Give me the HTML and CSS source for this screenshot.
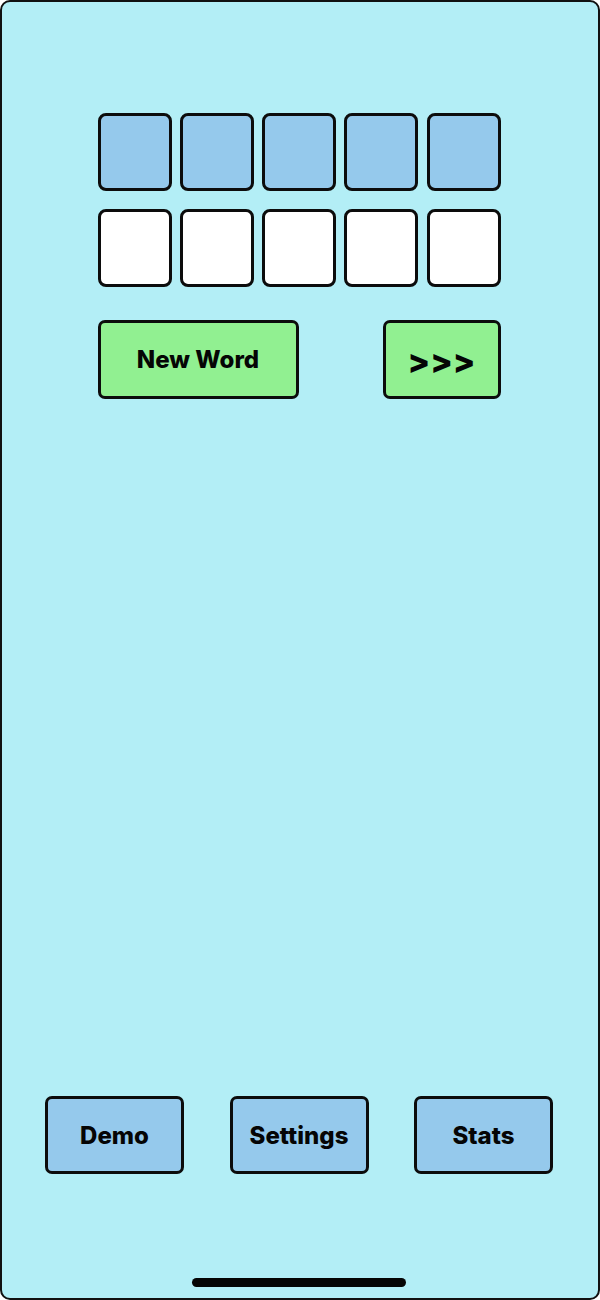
FILE: index.html
```html
<!DOCTYPE html>
<html lang="en">
<head>
    <meta charset="UTF-8">
    <meta name="viewport" content="width=device-width, initial-scale=1.0">
    <title>Word Game</title>
    <link rel="stylesheet" href="styles.css">
</head>
<body>
    <div class="screen">
        <div class="board">
            <div class="row">
                <div class="tile tile-blue"></div>
                <div class="tile tile-blue"></div>
                <div class="tile tile-blue"></div>
                <div class="tile tile-blue"></div>
                <div class="tile tile-blue"></div>
            </div>
            <div class="row">
                <div class="tile"></div>
                <div class="tile"></div>
                <div class="tile"></div>
                <div class="tile"></div>
                <div class="tile"></div>
            </div>
            <div class="actions">
                <button class="btn btn-green btn-new">New Word</button>
                <button class="btn btn-green btn-next">&gt;&gt;&gt;</button>
            </div>
        </div>

        <div class="spacer"></div>

        <nav class="menu">
            <button class="btn btn-blue">Demo</button>
            <button class="btn btn-blue">Settings</button>
            <button class="btn btn-blue">Stats</button>
        </nav>

        <div class="home-bar"></div>
    </div>
</body>
</html>
```

FILE: styles.css
```css
body {
    margin: 0;
    padding: 0;
    background-color: #fff;
    font-family: Inter, "Noto Sans", Arial, sans-serif;
}

.screen {
    height: 1300px;
    box-sizing: border-box;
    border: 2px solid #111;
    border-radius: 10px;
    background-color: #b3eef6;
    display: flex;
    flex-direction: column;
    align-items: center;
    padding-right: 2px;
}

.board {
    width: 403px;
    margin-top: 111px;
    display: flex;
    flex-direction: column;
    gap: 18px;
}

.row {
    display: flex;
    justify-content: space-between;
}

.tile {
    width: 74px;
    height: 78px;
    box-sizing: border-box;
    border: 3px solid #0c0c0c;
    border-radius: 8px;
    background-color: #fff;
}

.tile-blue {
    background-color: #95c9ec;
}

.actions {
    display: flex;
    justify-content: space-between;
    margin-top: 15px;
}

.btn {
    height: 79px;
    box-sizing: border-box;
    border: 3px solid #0c0c0c;
    border-radius: 7px;
    font-family: Inter, "Noto Sans", Arial, sans-serif;
    font-weight: 800;
    font-size: 24px;
    color: #050505;
    padding: 0;
    cursor: pointer;
}

.btn-green {
    background-color: #91f091;
}

.btn-blue {
    background-color: #95c9ec;
    width: 139px;
    height: 78px;
}

.btn-new {
    width: 201px;
}

.btn-next {
    width: 118px;
    font-size: 33px;
    padding-top: 2px;
}

.spacer {
    flex: 1;
}

.menu {
    width: 508px;
    display: flex;
    justify-content: space-between;
}

.home-bar {
    width: 214px;
    height: 9px;
    border-radius: 5px;
    background-color: #050505;
    margin-top: 104px;
    margin-bottom: 11px;
}
```
